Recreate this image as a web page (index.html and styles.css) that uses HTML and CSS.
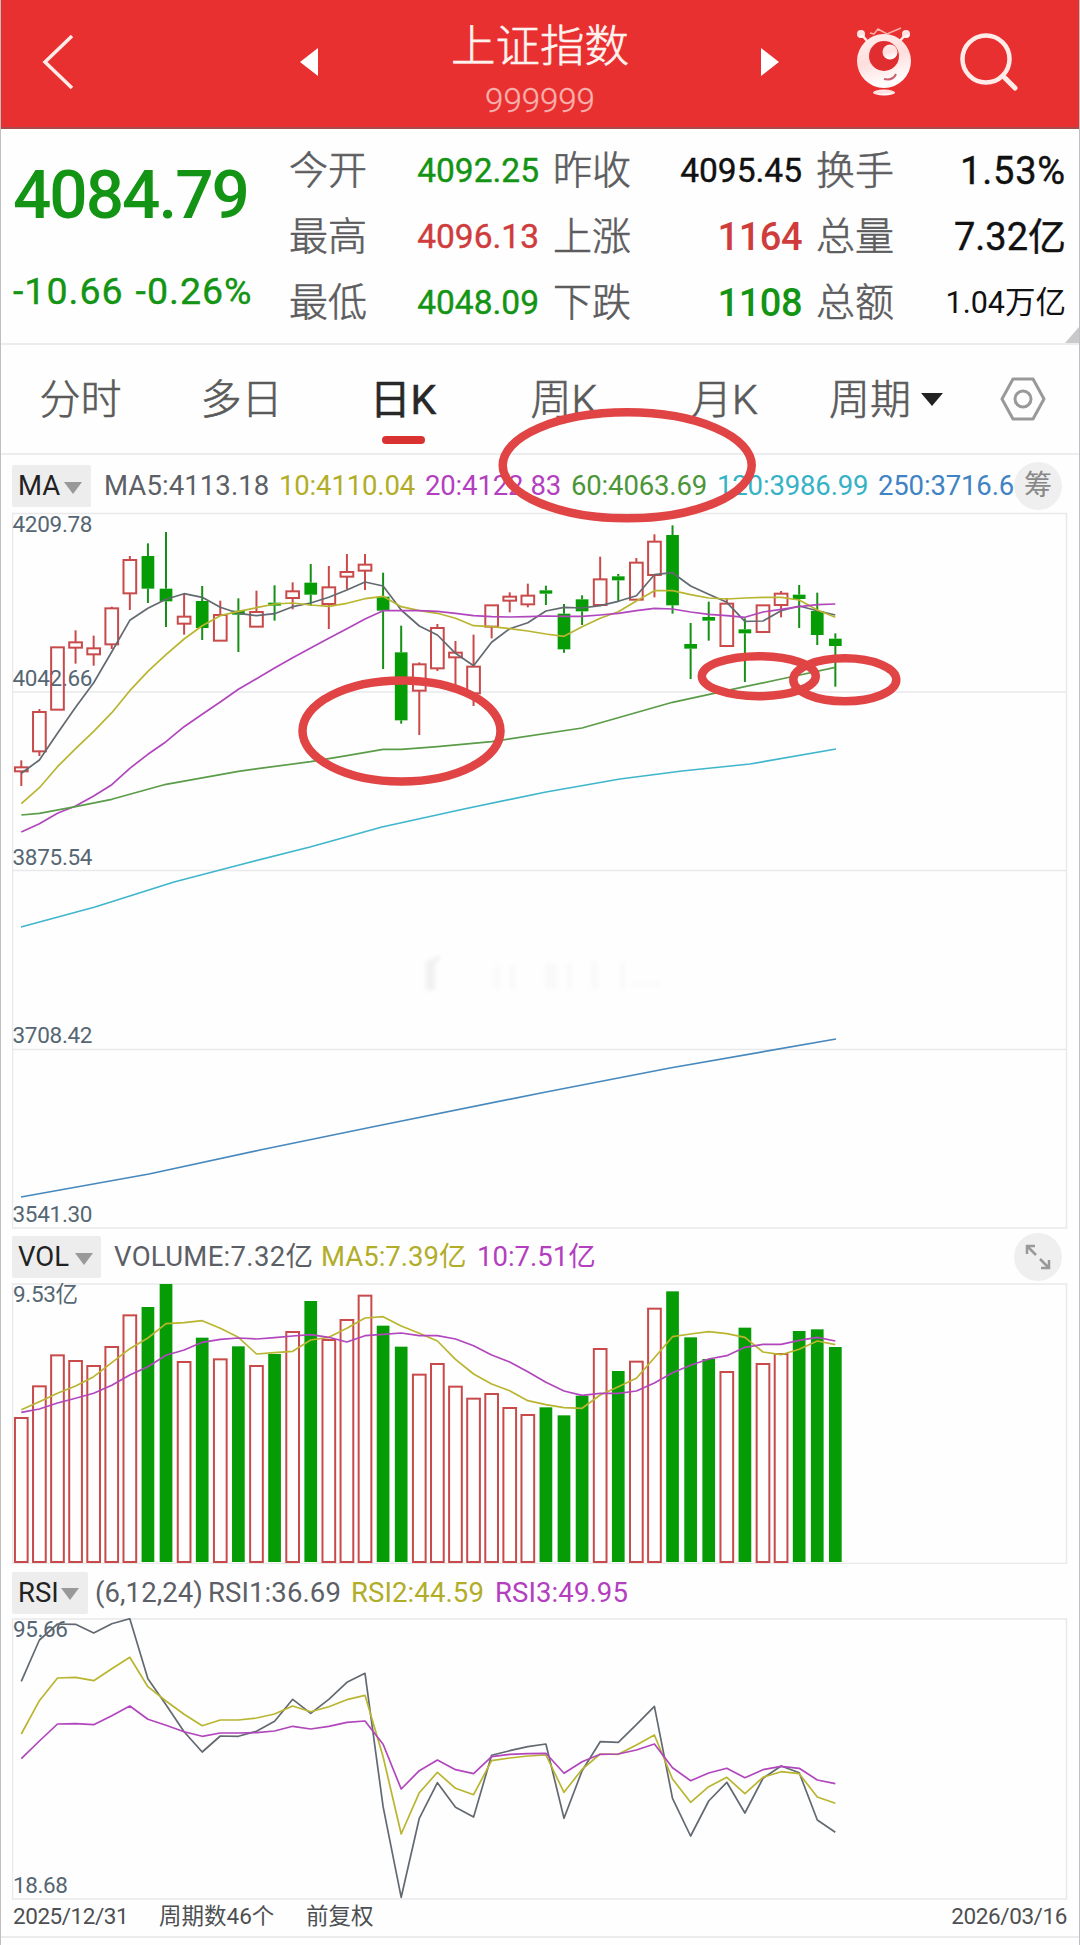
FILE: index.html
```html
<!DOCTYPE html>
<html lang="zh-CN">
<head>
<meta charset="utf-8">
<title>上证指数</title>
<link rel="stylesheet" href="styles.css">
</head>
<body>
<div class="app">
  <header class="topbar">
    <svg class="back" viewBox="0 0 34 58"><path d="M31 3 4 29l27 26"/></svg>
    <svg class="prev" viewBox="0 0 20 30"><path d="M19 1v28L1 15z"/></svg>
    <div class="heading">
      <h1 class="title">上证指数</h1>
      <div class="code">999999</div>
    </div>
    <svg class="next" viewBox="0 0 20 30"><path d="M1 1v28l18-14z"/></svg>
    <svg class="robot" viewBox="0 0 56 70">
      <defs><linearGradient id="skin" x1="0" y1="0" x2="0.3" y2="1"><stop offset="0" stop-color="#fff0ee"/><stop offset=".55" stop-color="#ffdedd"/><stop offset="1" stop-color="#fff"/></linearGradient></defs>
      <path class="antenna" d="m5 8 7 8M50 8l-7 8"/>
      <circle class="skin" cx="5" cy="8" r="4"/><circle class="skin" cx="50" cy="8" r="4"/>
      <path class="trend" d="m14 7 4 1 4-5 9 5 14-6"/>
      <circle class="skin" cx="28" cy="35" r="27"/>
      <circle class="eye" cx="28" cy="30" r="15"/>
      <circle class="skin" cx="34" cy="26" r="7.5"/>
      <path class="smile" d="M28 53q9 2 12-5"/>
      <ellipse class="skin" cx="28" cy="66.500" rx="11" ry="3"/>
    </svg>
    <svg class="search" viewBox="0 0 58 58"><circle cx="26" cy="26" r="23.500"/><path d="m43 43 12 12"/></svg>
  </header>

  <section class="quote">
    <div class="last">
      <div class="price down">4084.79</div>
      <div class="change down"><span>-10.66</span><span>-0.26%</span></div>
    </div>
    <dl class="stats">
      <dt>今开</dt><dd class="down">4092.25</dd><dt>昨收</dt><dd>4095.45</dd><dt>换手</dt><dd class="big wide">1.53%</dd>
      <dt>最高</dt><dd class="up">4096.13</dd><dt>上涨</dt><dd class="up big strong">1164</dd><dt>总量</dt><dd class="big">7.32亿</dd>
      <dt>最低</dt><dd class="down">4048.09</dd><dt>下跌</dt><dd class="down big strong">1108</dd><dt>总额</dt><dd class="small">1.04万亿</dd>
    </dl>
    <span class="corner"></span>
  </section>

  <nav class="tabs">
    <span class="tab">分时</span><span class="tab">多日</span><span class="tab active">日K</span><span class="tab">周K</span><span class="tab">月K</span>
    <span class="tab period">周期<svg viewBox="0 0 22 13"><path d="M0 0h22L11 13z"/></svg></span>
    <svg class="settings" viewBox="0 0 50 46"><path d="M15 3h20l11 20-11 20H15L4 23z"/><circle cx="25" cy="23" r="8"/></svg>
  </nav>

  <div class="legend legend-ma">
    <span class="picker ma">MA<svg viewBox="0 0 18 12"><path d="M0 0h18L9 12z"/></svg></span>
    <span class="gray">MA5:4113.18</span><span class="olive">10:4110.04</span><span class="purple">20:4122.83</span><span class="green">60:4063.69</span><span class="cyan">120:3986.99</span><span class="blue">250:3716.6</span>
    <span class="round">筹</span>
  </div>
  <svg class="chart" id="kline" viewBox="12 512 1056 717">
    <path class="grid" d="M12.500 513.500H1066.500V1228H12.500zM12 692H1066M12 870.500H1066M12 1049.500H1066"/>
    <g class="axis">
      <text x="12.500" y="531.500" textLength="80">4209.78</text>
      <text x="12.500" y="685.500" textLength="80">4042.66</text>
      <text x="12.500" y="864.500" textLength="80">3875.54</text>
      <text x="12.500" y="1043" textLength="80">3708.42</text>
      <text x="12.500" y="1222" textLength="80">3541.30</text>
    </g>
    <g class="smudge"><path opacity=".8" d="M426 962l14-7v4l-5 4v27h-9z"/><path opacity=".25" d="M494 966h6v23h-6zM510 966h5v23h-5zM545 964h12v25h-12zM567 964h5v25h-5zM591 962h7v27h-7zM620 962h5v27h-5zM632 982h30v4h-30z"/></g>
  </svg>

  <div class="legend legend-vol">
    <span class="picker vol">VOL<svg viewBox="0 0 18 12"><path d="M0 0h18L9 12z"/></svg></span>
    <span class="gray">VOLUME:7.32亿</span><span class="olive">MA5:7.39亿</span><span class="purple">10:7.51亿</span>
    <span class="round"><svg class="expand" viewBox="0 0 26 26"><path d="M10 2H2v8M2 2l9 9M16 24h8v-8M24 24l-9-9"/></svg></span>
  </div>
  <svg class="chart" id="volume" viewBox="12 1283 1056 281">
    <path class="grid" d="M12.500 1284H1066.500V1563.500H12.500z"/>
    <g class="axis"><text x="13" y="1301.500" textLength="65">9.53亿</text></g>
  </svg>

  <div class="legend legend-rsi">
    <span class="picker rsi">RSI<svg viewBox="0 0 18 12"><path d="M0 0h18L9 12z"/></svg></span>
    <span class="gray">(6,12,24)</span><span class="gray">RSI1:36.69</span><span class="olive">RSI2:44.59</span><span class="purple">RSI3:49.95</span>
  </div>
  <svg class="chart" id="rsi" viewBox="12 1618 1056 282">
    <path class="grid" d="M12.500 1619H1066.500V1899H12.500z"/>
    <g class="axis"><text x="13" y="1637" textLength="55">95.66</text><text x="13" y="1893" textLength="55">18.68</text></g>
  </svg>

  <footer class="dates"><span class="from">2025/12/31</span><span class="count">周期数46个</span><span class="adj">前复权</span><span class="to">2026/03/16</span></footer>

  <svg class="marks" viewBox="0 0 1080 1945">
    <ellipse cx="627.200" cy="465.300" rx="124.500" ry="53"/>
    <ellipse cx="401.500" cy="731" rx="99" ry="50.500"/>
    <ellipse cx="758.800" cy="676.200" rx="57" ry="20"/>
    <ellipse cx="844.800" cy="679.800" rx="51.500" ry="21.500"/>
  </svg>
</div>
<script src="charts.js"></script>
</body>
</html>
```
FILE: styles.css
```css
* { box-sizing: border-box; }
body { margin: 0; background: #fefefe; font-family: Roboto, "Noto Sans CJK SC", sans-serif; color: #111; }
.app { position: relative; width: 1080px; height: 1945px; overflow: hidden; display: flex; flex-direction: column; border-left: 1px solid #bfbfc2; border-right: 1px solid #bfbfc2; }
.up { color: #cf3c3c; }
.down { color: #149414; }

.topbar { height: 129px; flex: none; margin: 0 -1px; background: #e93030; border-bottom: 2px solid #a94b4b; display: grid; grid-template-columns: 258px 151px 180px 150px 127px 111px; align-items: center; padding-left: 41px; }
.topbar svg { fill: none; stroke: #ffece8; display: block; margin-top: -4px; }
.back { width: 34px; height: 58px; }
.back path { stroke-width: 3.5; }
.topbar .prev, .topbar .next { width: 20px; height: 30px; fill: #fff; stroke: none; }
.next { justify-self: end; }
.heading { text-align: center; margin: 0 -10px; white-space: nowrap; align-self: start; }
.title { margin: 16px 0 0; font-size: 44.500px; line-height: 62px; font-weight: 300; color: #fff3f0; -webkit-text-stroke: .6px #fff3f0; }
.code { font-size: 33px; line-height: 46px; font-weight: 300; color: #f9b3af; -webkit-text-stroke: .3px; }
.topbar .robot { width: 56px; height: 70px; justify-self: end; margin-top: -6px; margin-right: -5px; }
.topbar .robot .skin { fill: url(#skin); stroke: none; }
.antenna { stroke-width: 2.500; }
.trend { stroke-width: 1.500; stroke: #ffb0a8; }
.topbar .robot .eye { fill: #e02d30; stroke: none; }
.smile { stroke: #c96070; stroke-width: 2; }
.search { width: 58px; height: 58px; justify-self: end; }
.search circle { stroke-width: 4.500; }
.search path { stroke-width: 5; stroke-linecap: round; }

.quote { position: relative; height: 216px; flex: none; display: flex; border-bottom: 2px solid #ececee; }
.last { width: 276px; flex: none; padding: 32px 0 0 12px; }
.price { font-size: 67.500px; line-height: 68px; font-weight: 500; letter-spacing: -2px; }
.change { display: flex; gap: 12px; margin: 39px 0 0; font-size: 37.500px; line-height: 46px; letter-spacing: 1px; white-space: nowrap; -webkit-text-stroke: .4px; }
.stats { margin: 9px 0 0; display: grid; grid-template-columns: 78px 172px 92px 171px 92px 172px; grid-auto-rows: 66px; align-items: center; padding-left: 12px; }
.stats dt { font-size: 39px; font-weight: 300; color: #5c5c5e; -webkit-text-stroke: .6px; line-height: 60px; white-space: nowrap; }
.stats dt:nth-of-type(3n+2), .stats dt:nth-of-type(3n) { padding-left: 14px; }
.stats dd { margin: 0; text-align: right; font-size: 33.500px; line-height: 60px; white-space: nowrap; -webkit-text-stroke: .4px; }
.stats .big { font-size: 38px; }
.stats .wide { letter-spacing: .8px; }
.stats .strong { font-weight: 500; letter-spacing: -.5px; -webkit-text-stroke: 0; }
.stats .small { font-size: 30.500px; -webkit-text-stroke: 0; }
.corner { position: absolute; right: 0; bottom: 0; border-style: solid; border-width: 0 0 16px 14px; border-color: transparent transparent #c9c9cb; }

.tabs { height: 110px; flex: none; display: grid; grid-template-columns: 159px 163px 162px 158px 163px 170px 1fr; border-bottom: 2px solid #ededef; font-size: 41px; font-weight: 300; line-height: 60px; color: #5a5a5a; -webkit-text-stroke: .6px; padding-top: 25px; }
.tab { text-align: center; white-space: nowrap; }
.active { position: relative; color: #282828; font-weight: 400; -webkit-text-stroke: .5px; left: -1px; }
.active::after { content: ""; position: absolute; left: 60px; top: 66px; width: 43px; height: 8px; border-radius: 4px; background: #d93232; }
.period { padding-left: 23px; text-align: left; }
.period svg { width: 22px; height: 13px; margin-left: 10px; vertical-align: 8px; fill: #222; }
.settings { width: 50px; height: 46px; margin: 6px 0 0 22px; fill: none; stroke: #999; stroke-width: 3; stroke-linejoin: round; }

.legend { flex: none; display: flex; align-items: center; padding-left: 11px; font-size: 27.500px; line-height: 42px; white-space: nowrap; }
.legend > span { flex: none; }
.legend-ma { height: 57px; padding-top: 5px; letter-spacing: -.15px; }
.legend-vol { height: 54px; padding-top: 2px; }
.legend-rsi { height: 54px; padding-top: 3px; }
.picker { height: 42px; display: flex; align-items: center; justify-content: space-between; background: #ededed; color: #222; letter-spacing: 0; border-radius: 2px; }
.picker svg { width: 18px; height: 12px; fill: #999; margin-top: 3px; }
.ma { width: 79px; padding: 0 9px 0 6px; }
.vol { width: 89px; padding: 0 8px 0 6px; }
.rsi { width: 76px; padding: 0 9px 0 6px; }
.gray { color: #5c6066; }
.olive { color: #b1ad28; }
.purple { color: #b33fc0; }
.green { color: #4b9639; }
.cyan { color: #35b2c6; }
.blue { color: #4083c4; }
.legend-ma .gray { width: 175px; margin-left: 13px; letter-spacing: .1px; }
.legend-ma .olive, .legend-ma .purple, .legend-ma .green { width: 146px; }
.legend-ma .cyan { width: 161px; }
.legend-ma .blue { width: 134px; }
.legend-vol .gray { width: 207px; margin-left: 13px; letter-spacing: .3px; }
.legend-vol .olive { width: 156px; }
.legend-rsi { letter-spacing: .1px; }
.legend-rsi .gray { margin-left: 7px; width: 113px; }
.legend-rsi .gray + .gray { margin-left: 0; width: 143px; }
.legend-rsi .olive { width: 144px; }
.round { width: 48px; height: 48px; border-radius: 50%; background: #efefef; color: #888; display: flex; align-items: center; justify-content: center; letter-spacing: 0; font-size: 28px; margin-left: auto; margin-right: 17px; }
.expand { width: 26px; height: 26px; fill: none; stroke: #999; stroke-width: 2.500; }

.chart { display: block; flex: none; width: 1056px; margin-left: 11px; }
#kline { height: 717px; }
#volume { height: 281px; }
#rsi { height: 282px; }
.grid { fill: none; stroke: #e9e9eb; stroke-width: 1.500; }
.axis { font-size: 22.500px; fill: #566672; }
.smudge { fill: #ececec; filter: blur(2px); }
.rise { fill: none; stroke: #c94a4a; stroke-width: 2; }
.wick-up { stroke: #c94a4a; stroke-width: 2; }
.fall { fill: #069c06; }
.wick-down { stroke: #158f15; stroke-width: 2; }
.line { fill: none; stroke-width: 1.700; stroke-linejoin: round; }
.line.l-gray { stroke: #626970; }
.line.l-olive { stroke: #b9b530; }
.line.l-purple { stroke: #b146bd; }
.line.l-green { stroke: #5a9c48; }
.line.l-cyan { stroke: #3fb6cb; }
.line.l-blue { stroke: #4788bd; }

.dates { height: 38px; flex: none; display: flex; align-items: center; padding: 0 12px 4px 12px; font-size: 22.500px; line-height: 34px; color: #4d4f52; border-bottom: 2px solid #ececee; white-space: nowrap; }
.from { width: 146px; letter-spacing: -.45px; }
.count { width: 147px; }
.to { margin-left: auto; letter-spacing: -.4px; }

.marks { position: absolute; left: -1px; top: 0; width: 1080px; height: 1945px; fill: none; stroke: #e04444; stroke-width: 8.500; }
```
FILE: charts.js
```js
const NS = "http://www.w3.org/2000/svg";
const STEP = 18.09, START = 21.3, BODY = 12.7;
const cx = i => START + i * STEP;

function add(parent, tag, attrs) {
  const node = document.createElementNS(NS, tag);
  for (const k in attrs) node.setAttribute(k, attrs[k]);
  parent.appendChild(node);
}

// Values are thirds of a pixel below the given base line.
function line(parent, cls, base, values) {
  const pts = [];
  values.forEach((v, i) => { if (v !== null) pts.push(cx(i).toFixed(1) + "," + (base + v / 3).toFixed(1)); });
  add(parent, "polyline", { class: "line " + cls, points: pts.join(" ") });
}
function sparse(parent, cls, points) {
  add(parent, "polyline", { class: "line " + cls, points });
}

// direction, high, body top, body bottom, low
const candles = [
  ["r",781,802,814,858],["r",627,636,754,768],["r",442,442,629,629],["r",391,427,443,491],["r",407,445,463,497],
  ["r",320,325,433,447],["r",168,180,280,330],["g",130,168,266,309],["g",96,266,304,381],["r",281,350,371,404],
  ["g",258,303,384,420],["r",302,345,422,422],["g",295,332,344,456],["r",272,336,380,380],["g",256,308,317,362],
  ["r",247,274,294,328],["g",192,248,284,318],["r",198,262,312,387],["r",162,216,230,268],["r",162,194,212,270],
  ["g",218,290,332,507],["g",377,457,661,671],["r",487,493,572,705],["r",372,384,505,513],["r",423,458,472,555],
  ["r",404,500,580,618],["r",315,316,380,415],["r",277,290,302,337],["r",251,287,313,322],["g",257,271,281,315],
  ["g",312,341,448,458],["g",286,298,334,375],["r",170,238,315,315],["g",222,229,241,305],["r",174,188,299,299],
  ["r",103,125,225,292],["g",76,105,316,341],["g",369,432,446,537],["g",305,351,362,422],["r",294,311,438,438],
  ["g",355,388,400,546],["r",316,316,396,396],["r",273,281,315,352],["g",255,284,297,384],["g",278,333,405,435],
  ["g",400,416,438,560]
];
const k = document.getElementById("kline");
candles.forEach(([d, hi, top, bot, lo], i) => {
  const x = cx(i), y = v => 500 + v / 3, up = d === "r", wick = up ? "wick-up" : "wick-down";
  add(k, "line", { class: wick, x1: x, x2: x, y1: y(hi), y2: y(top) });
  add(k, "line", { class: wick, x1: x, x2: x, y1: y(bot), y2: y(lo) });
  add(k, "rect", { class: up ? "rise" : "fall", x: x - BODY / 2, width: BODY, y: y(top), height: y(bot) - y(top) });
});
line(k, "l-gray", 500, [820,780,700,622,548,455,361,325,298,281,292,322,340,347,341,320,309,292,270,246,258,330,378,405,460,497,427,386,368,333,322,324,317,304,287,224,218,258,283,307,364,363,332,318,332,345]);
line(k, "l-olive", 500, [911,863,800,746,694,638,572,514,464,417,377,347,334,323,312,309,315,319,310,296,289,320,332,340,355,377,380,386,393,402,409,380,355,335,303,272,272,284,294,297,294,292,292,300,330,352]);
line(k, "l-purple", 500, [996,971,940,918,888,854,805,763,725,680,643,606,568,536,504,473,444,415,386,357,332,332,332,334,340,347,350,351,350,348,349,349,345,340,332,325,327,336,343,347,352,336,328,320,314,312]);
const n = null;
line(k, "l-green", 500, [945,940,n,920,n,898,n,n,853,n,n,n,814,n,n,n,785,n,767,n,748,748,n,740,n,n,725,n,n,n,n,684,n,n,n,n,607,n,n,n,560,n,537,n,n,502]);
sparse(k, "l-cyan", "21,927 95,907 174,882 243,864 310,847 382,827 464,809 546,792 620,779 682,771 750,764 836,749");
sparse(k, "l-blue", "21,1197 149,1174 260,1150 372,1127 546,1092 670,1068 836,1039");

const vol = document.getElementById("volume");
const bars = "r594 r499 r406 r423 r438 r381 r286 g261 g192 r426 g353 r418 g379 r438 g402 r336 g243 r360 r300 r227 g317 g380 r464 r432 r500 r536 r522 r564 r585 g562 g586 g527 r387 g453 r425 r266 g214 g352 g417 r456 g323 r432 r402 g333 g328 g381";
bars.split(" ").forEach((b, i) => {
  const top = 1220 + b.slice(1) / 3;
  add(vol, "rect", { class: b[0] === "r" ? "rise" : "fall", x: cx(i) - BODY / 2, width: BODY, y: top, height: 1562 - top });
});
line(vol, "l-olive", 1220, [569,545,520,498,470,428,386,354,311,308,302,325,352,402,398,394,360,352,325,294,290,318,340,363,418,462,492,512,542,554,563,565,525,500,475,413,350,342,335,341,352,396,404,388,363,374]);
line(vol, "l-purple", 1220, [577,567,549,535,520,496,465,440,406,390,367,358,354,357,353,348,344,352,366,347,343,339,347,347,357,377,405,426,455,487,513,526,520,520,513,489,458,436,417,407,382,373,373,361,352,363]);

const r = document.getElementById("rsi");
line(r, "l-gray", 1560, [364,240,192,193,219,191,176,356,434,515,576,528,529,514,484,418,460,418,367,340,740,1012,775,668,742,771,586,572,560,552,775,632,545,547,494,439,715,828,723,667,759,655,618,638,780,817]);
line(r, "l-olive", 1560, [522,422,354,352,362,326,292,380,423,463,497,480,480,474,462,438,455,440,419,406,590,822,698,637,685,704,602,594,588,585,697,628,582,583,555,525,657,727,680,652,701,652,635,641,711,730]);
line(r, "l-purple", 1560, [596,543,492,491,494,467,438,478,496,515,529,519,519,518,513,499,507,499,487,483,553,687,632,600,629,641,590,583,581,580,640,605,583,582,570,552,623,662,639,625,653,629,619,625,660,671]);
```
